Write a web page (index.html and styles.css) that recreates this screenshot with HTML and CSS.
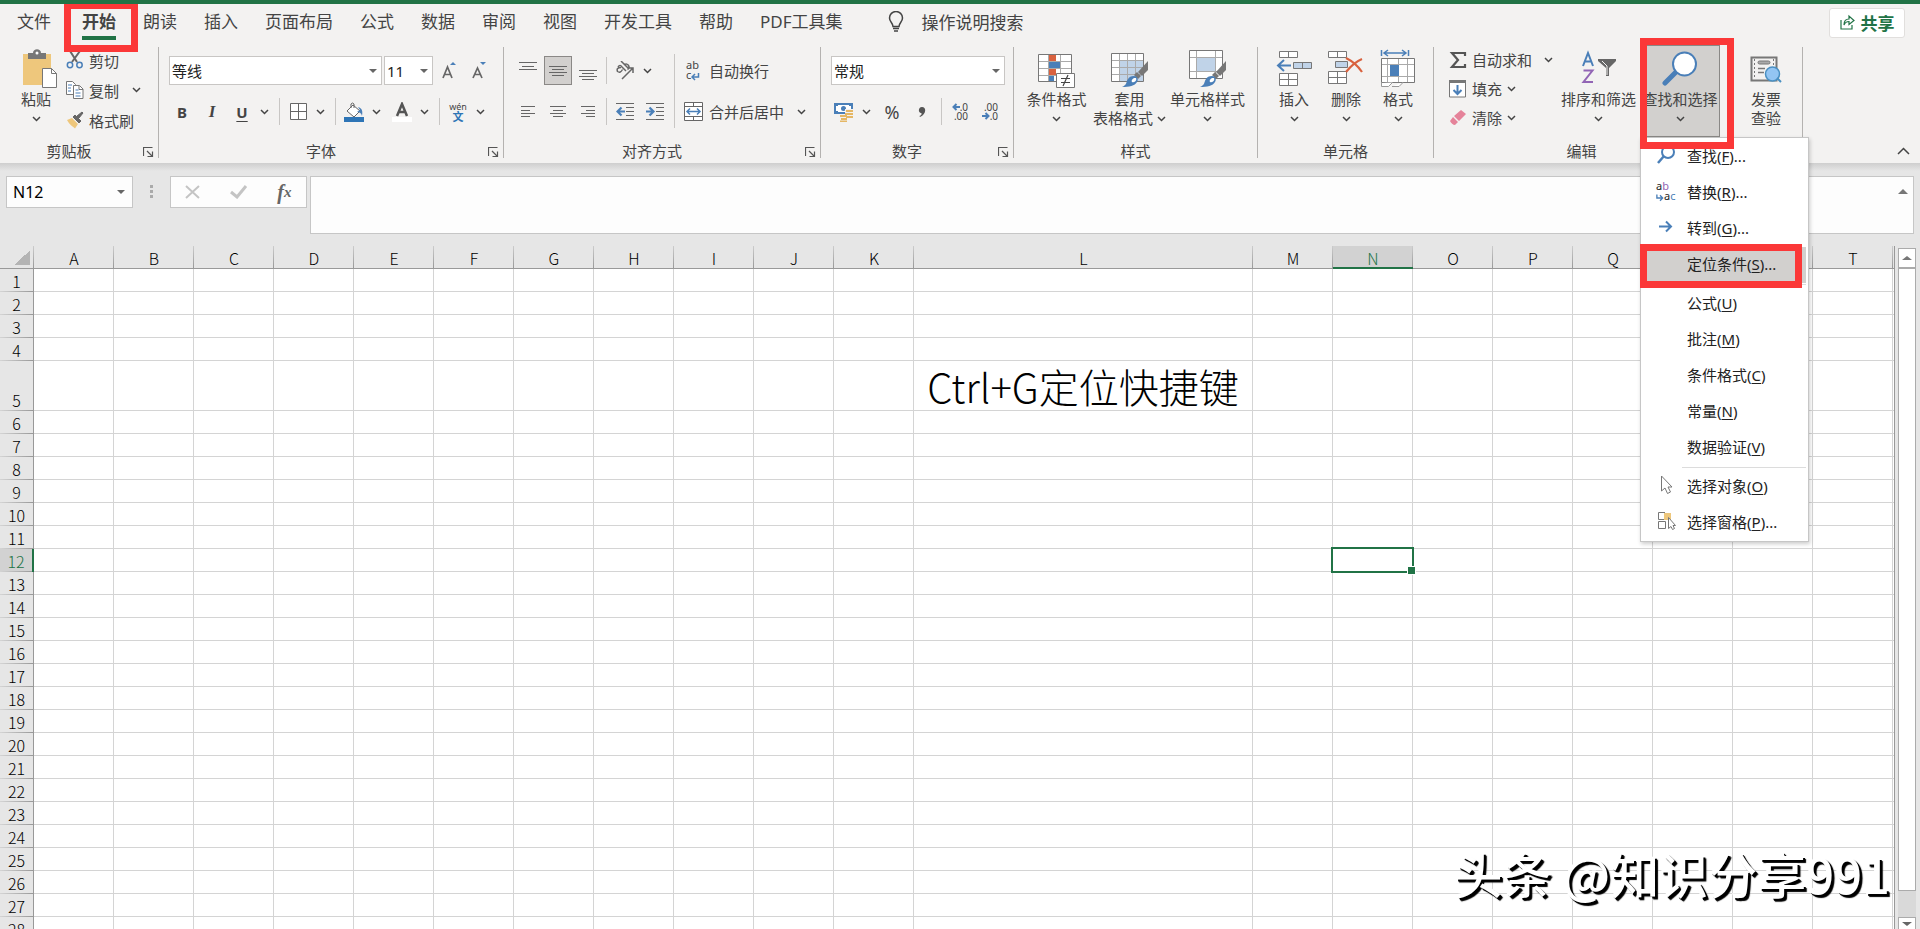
FILE: index.html
```html
<!DOCTYPE html>
<html lang="zh-CN">
<head>
    <meta charset="UTF-8">
    <meta name="viewport" content="width=device-width, initial-scale=1.0">
    <title>Excel</title>
    <link rel="stylesheet" href="styles.css">
</head>
<body>
    <!-- shared icons -->
    <svg class="defs" width="0" height="0">
        <symbol id="chev" viewBox="0 0 9 6"><path d="M1 1l3.5 3.5L8 1" fill="none" stroke="#444" stroke-width="1.5"/></symbol>
        <symbol id="launch" viewBox="0 0 11 11"><path d="M.5 9V.5H9.500M4 4l5 5M9.500 4.500V9.500H4.500" fill="none" stroke="#555" stroke-width="1.200"/></symbol>
        <symbol id="brush" viewBox="0 0 28 28">
            <path d="M27 1v9l-6 6-4-4z" fill="#777"/><path d="M16 12l4 4-3 3-4-4z" fill="#777"/>
            <path d="M13 16c3 0 5 3 3 6-2 4-8 5-15 5 5-2 4-5 6-8 1-2 3-3 6-3z" fill="#4a7fb8"/>
            <path d="M13 18c-2 1-3 3-2 4 3 1 5-2 4-4z" fill="#fff"/>
        </symbol>
    </svg>

    <nav class="tabs">
        <a href="#" class="tab tab-file">文件</a>
        <a href="#" class="tab active">开始<span class="mark mark-tab"></span></a>
        <a href="#" class="tab">朗读</a>
        <a href="#" class="tab">插入</a>
        <a href="#" class="tab">页面布局</a>
        <a href="#" class="tab">公式</a>
        <a href="#" class="tab">数据</a>
        <a href="#" class="tab">审阅</a>
        <a href="#" class="tab">视图</a>
        <a href="#" class="tab">开发工具</a>
        <a href="#" class="tab">帮助</a>
        <a href="#" class="tab">PDF工具集</a>
        <button class="tell-me">
            <svg width="16" height="21" viewBox="0 0 16 21" fill="none" stroke="#444" stroke-width="1.500"><path d="M5 15.500C5 12 1.500 11 1.500 7a6.500 6.500 0 0 1 13 0c0 4-3.500 5-3.500 8.500zM5 17.500h6M6 20h4"/></svg>
            操作说明搜索
        </button>
        <button class="share">
            <svg width="15" height="16" viewBox="0 0 15 16" fill="none" stroke="#217346" stroke-width="1.200"><path d="M1 6v9h11v-4M4 11c0-4 2-6 5-6V2l5 4.500-5 4V7.500C7 7.500 5 8.500 4 11z"/></svg>
            共享
        </button>
    </nav>

    <div class="ribbon">
        <section class="group">
            <div class="body clipboard">
                <button class="big paste">
                    <svg width="36" height="40" viewBox="0 0 36 40"><path d="M1 5h28v31H1z" fill="#eec77c"/><path d="M6 4h5c0-5 8-5 8 0h5v6H6z" fill="#777"/><circle cx="15" cy="4" r="1.500" fill="#fff"/><path d="M20.500 19.500h9l5 5v14h-14z" fill="#fff" stroke="#777"/><path d="M29.500 19.500v5h5" fill="none" stroke="#777"/></svg>
                    <span>粘贴</span>
                    <svg class="chev"><use href="#chev"/></svg>
                </button>
                <div class="stack wide-rows">
                    <button class="small">
                        <svg width="18" height="18" viewBox="0 0 18 18" fill="none"><path d="M4 0l7 11M14 0L6 11" stroke="#666" stroke-width="2"/><circle cx="4" cy="14" r="2.700" stroke="#4a7fb8" stroke-width="1.500"/><circle cx="13.500" cy="14" r="2.700" stroke="#4a7fb8" stroke-width="1.500"/></svg>
                        剪切
                    </button>
                    <button class="small">
                        <svg width="18" height="18" viewBox="0 0 18 18" fill="#fff" stroke="#777"><path d="M.5.5h6l3 3v10h-9z"/><path d="M2 4h4M2 7h3M2 10h3" stroke="#4a7fb8"/><path d="M7.500 4.500h6l3.500 3.500v9.500h-9.500z"/><path d="M13 5v3.500h4" fill="none"/><path d="M9.500 9h3M9.500 12h5M9.500 15h5" stroke="#4a7fb8"/></svg>
                        复制
                        <svg class="chev far"><use href="#chev"/></svg>
                    </button>
                    <button class="small">
                        <svg width="18" height="18" viewBox="0 0 18 18"><path d="M1 9l5-2 6 6-3 4.500c-3-3-5-3-8-8.500z" fill="#eec77c"/><path d="M7 6l2-2 6 6-2 2zM11 5l5-4 1 1-4 5z" fill="#666" stroke="#666"/></svg>
                        格式刷
                    </button>
                </div>
            </div>
            <footer><span>剪贴板</span><svg class="launch"><use href="#launch"/></svg></footer>
        </section>

        <section class="group">
            <div class="body rows">
                <div class="row fields">
                    <span class="pick font-name"><select aria-label="字体"><option>等线</option></select></span>
                    <span class="pick font-size"><select aria-label="字号"><option>11</option></select></span>
                    <button class="tool" aria-label="增大字号"><svg width="18" height="20" viewBox="0 0 18 20"><path d="M2 17L6.500 6 11 17M3.500 13.500h6" fill="none" stroke="#666" stroke-width="1.700"/><path d="M9 4l3-3 3 3z" fill="#4a7fb8"/></svg></button>
                    <button class="tool" aria-label="减小字号"><svg width="18" height="20" viewBox="0 0 18 20"><path d="M2 17L6.500 7 11 17M3.500 13.500h6" fill="none" stroke="#666" stroke-width="1.700"/><path d="M9 1l3 3 3-3z" fill="#4a7fb8"/></svg></button>
                </div>
                <div class="row">
                    <button class="tool bold">B</button>
                    <button class="tool italic">I</button>
                    <span class="split"><button class="tool under">U</button><button class="arrow" aria-label="下划线"><svg class="chev"><use href="#chev"/></svg></button></span>
                    <i class="sep"></i>
                    <span class="split"><button class="tool" aria-label="边框"><svg width="17" height="17" viewBox="0 0 17 17"><path d="M.5.5h16v16H.5zM8.500 1v15M1 8.500h15" fill="#fff" stroke="#666"/></svg></button><button class="arrow" aria-label="更多边框"><svg class="chev"><use href="#chev"/></svg></button></span>
                    <i class="sep"></i>
                    <span class="split"><button class="tool" aria-label="填充颜色"><svg width="20" height="20" viewBox="0 0 20 20"><path d="M3 9l6-6 7 6-6 6z" fill="#fff" stroke="#666"/><path d="M7 6V2q1.500-2 3 0v4" fill="none" stroke="#666"/><path d="M14 5c4 1 5 4 4 9-1-3-2-4-5-4l3-2z" fill="#4a7fb8"/><path d="M0 15h20v5H0z" fill="#2e75b6"/></svg></button><button class="arrow" aria-label="更多颜色"><svg class="chev"><use href="#chev"/></svg></button></span>
                    <span class="split"><button class="tool" aria-label="字体颜色"><svg width="20" height="20" viewBox="0 0 20 20"><path d="M5 14l5-12 5 12M6.500 10h7" fill="none" stroke="#555" stroke-width="2.500"/><path d="M0 15h20v5H0z" fill="#fff"/></svg></button><button class="arrow" aria-label="更多字体颜色"><svg class="chev"><use href="#chev"/></svg></button></span>
                    <i class="sep"></i>
                    <span class="split"><button class="tool pinyin"><small>wén</small><b>文</b></button><button class="arrow" aria-label="拼音"><svg class="chev"><use href="#chev"/></svg></button></span>
                </div>
            </div>
            <footer><span>字体</span><svg class="launch"><use href="#launch"/></svg></footer>
        </section>

        <section class="group">
            <div class="body align">
                <div class="rows">
                    <div class="row">
                        <button class="tool" aria-label="顶端对齐"><svg width="18" height="20" viewBox="0 0 18 20"><path d="M0 1.500h18M3 5.500h12M0 8.500h18" stroke="#666"/></svg></button>
                        <button class="tool on" aria-label="垂直居中"><svg width="18" height="20" viewBox="0 0 18 20"><path d="M0 5.500h18M3 8.500h12M0 11.500h18M3 14.500h12" stroke="#666"/></svg></button>
                        <button class="tool" aria-label="底端对齐"><svg width="18" height="20" viewBox="0 0 18 20"><path d="M0 9.500h18M3 12.500h12M0 15.500h18M3 18.500h12" stroke="#666"/></svg></button>
                        <i class="sep"></i>
                        <span class="split"><button class="tool" aria-label="方向"><svg width="20" height="20" viewBox="0 0 20 20" fill="none" stroke="#666" stroke-width="1.500"><path d="M3 6q2-3 4 0l4 4M6 6.500q-5 0-3.500 4 3 2 5-2M6 0l7 7M9 4q3-2 4.500.5t-1 4M7 18L18 7M13 7h5v5"/></svg></button><button class="arrow" aria-label="更多方向"><svg class="chev"><use href="#chev"/></svg></button></span>
                    </div>
                    <div class="row">
                        <button class="tool" aria-label="左对齐"><svg width="14" height="12" viewBox="0 0 14 12"><path d="M0 .5h14M0 4.500h9M0 7.500h14M0 10.500h9" stroke="#666"/></svg></button>
                        <button class="tool" aria-label="居中"><svg width="16" height="12" viewBox="0 0 16 12"><path d="M0 .5h16M3 4.500h10M0 7.500h16M3 10.500h10" stroke="#666"/></svg></button>
                        <button class="tool" aria-label="右对齐"><svg width="14" height="12" viewBox="0 0 14 12"><path d="M0 .5h14M5 4.500h9M0 7.500h14M5 10.500h9" stroke="#666"/></svg></button>
                        <i class="sep"></i>
                        <button class="tool" aria-label="减少缩进"><svg width="19" height="17" viewBox="0 0 19 17"><path d="M0 .5h18M10 4.500h8M10 8.500h8M10 12.500h8M0 16.500h18" stroke="#666"/><path d="M9 8.500H2M5.500 4.500l-4 4 4 4" fill="none" stroke="#4a7fb8" stroke-width="2.200"/></svg></button>
                        <button class="tool" aria-label="增加缩进"><svg width="19" height="17" viewBox="0 0 19 17"><path d="M0 .5h18M10 4.500h8M10 8.500h8M10 12.500h8M0 16.500h18" stroke="#666"/><path d="M0 8.500h7M3.500 4.500l4 4-4 4" fill="none" stroke="#4a7fb8" stroke-width="2.200"/></svg></button>
                    </div>
                </div>
                <i class="sep tall"></i>
                <div class="rows">
                    <button class="small row"><span class="wrap-icon">ab<br>c<svg width="9" height="8" viewBox="0 0 9 8"><path d="M7.500 0v4H1M4 1L1 4l3 3" fill="none" stroke="#4a7fb8" stroke-width="1.500"/></svg></span>自动换行</button>
                    <button class="small row">
                        <svg width="20" height="19" viewBox="0 0 20 19"><path d="M.5.500h18v18H.500zM.500 4.500h18M.500 14.500h18M9.500 0v4M9.500 15v4" fill="#fff" stroke="#666"/><path d="M3 9.500h13M6 6.500l-3 3 3 3M13 6.500l3 3-3 3" fill="none" stroke="#4a7fb8" stroke-width="1.500"/></svg>
                        合并后居中
                        <svg class="chev far"><use href="#chev"/></svg>
                    </button>
                </div>
            </div>
            <footer><span>对齐方式</span><svg class="launch"><use href="#launch"/></svg></footer>
        </section>

        <section class="group">
            <div class="body rows">
                <div class="row fields"><span class="pick number-format"><select aria-label="数字格式"><option>常规</option></select></span></div>
                <div class="row">
                    <span class="split"><button class="tool" aria-label="会计数字格式"><svg width="20" height="20" viewBox="0 0 20 20"><path d="M0 1h19v11H0z" fill="#4a7fb8"/><path d="M4 3h11v1h2v5h-2v1H4V9H2V4h2z" fill="#fff"/><circle cx="9.500" cy="6.500" r="2.500" fill="#4a7fb8"/><path d="M11 7h9v11h-9z" fill="#f3f2f1"/><path d="M12 9h7M11 12h8M12 15h7M6 14h7M7 17h6M6 19.500h7" stroke="#e5b765" stroke-width="2"/></svg></button><button class="arrow" aria-label="更多"><svg class="chev"><use href="#chev"/></svg></button></span>
                    <button class="tool percent">%</button>
                    <button class="tool comma" aria-label="千位分隔"><svg width="8" height="10" viewBox="0 0 8 10"><path d="M4 0c5 0 4 8-2 10l-.5-1C4 8 4 6 3 6 0 6 0 0 4 0z" fill="#555"/></svg></button>
                    <i class="sep"></i>
                    <button class="tool decimal"><span><svg width="8" height="8" viewBox="0 0 8 8"><path d="M8 4H2M4.500 1l-3 3 3 3" fill="none" stroke="#4a7fb8" stroke-width="2"/></svg>.0</span><span>.00</span></button>
                    <button class="tool decimal"><span>.00</span><span><svg width="8" height="8" viewBox="0 0 8 8"><path d="M0 4h6M3.500 1l3 3-3 3" fill="none" stroke="#4a7fb8" stroke-width="2"/></svg>.0</span></button>
                </div>
            </div>
            <footer><span>数字</span><svg class="launch"><use href="#launch"/></svg></footer>
        </section>

        <section class="group">
            <div class="body styles">
                <button class="big">
                    <svg width="38" height="40" viewBox="0 0 38 40"><path d="M.5 5.500h33v27H.5z" fill="#fff"/><path d="M11 6h7v6h-7zM11 20h7v6h-7z" fill="#d9623f"/><path d="M11 13h11v6H11zM11 27h5v6h-5z" fill="#4a7fb8"/><path d="M10.500 6v27M22.500 6v27M1 12.500h33M1 19.500h33M1 26.500h33" stroke="#aaa" fill="none"/><path d="M.5 5.500h33v27H.5z" fill="none" stroke="#777"/><path d="M18.500 24.500h18v14h-18z" fill="#fff" stroke="#777"/><path d="M23 29.500h9M23 33.500h9M30 26l-5 11" stroke="#444" stroke-width="1.200"/></svg>
                    <span>条件格式</span>
                    <svg class="chev"><use href="#chev"/></svg>
                </button>
                <button class="big">
                    <svg width="38" height="40" viewBox="0 0 38 40"><path d="M.5 4.500h32v28H.5z" fill="#fff"/><path d="M9 12h23v20H9z" fill="#c0d3e8"/><path d="M8.500 5v27M16.500 5v27M24.500 5v27M1 11.500h31M1 18.500h31M1 25.500h31" stroke="#aaa"/><path d="M.5 4.500h32v28H.5z" fill="none" stroke="#777"/><use href="#brush" x="10" y="11" width="28" height="28"/></svg>
                    <span>套用</span>
                    <span class="line">表格格式<svg class="chev"><use href="#chev"/></svg></span>
                </button>
                <button class="big">
                    <svg width="38" height="40" viewBox="0 0 38 40"><path d="M.5 1.500h33v28H.5z" fill="#fff" stroke="#777"/><path d="M8 9h18v13H8z" fill="#c0d3e8"/><path d="M7.500 2v27M26.500 2v27M1 8.500h32M1 22.500h32" stroke="#aaa"/><use href="#brush" x="10" y="11" width="28" height="28"/></svg>
                    <span>单元格样式</span>
                    <svg class="chev"><use href="#chev"/></svg>
                </button>
            </div>
            <footer><span>样式</span></footer>
        </section>

        <section class="group">
            <div class="body cells">
                <button class="big">
                    <svg width="36" height="40" viewBox="0 0 36 40" fill="#fff" stroke="#777"><path d="M3.500 2.500h18v6h-18zM12.500 3v5M3.500 24.500h18v12h-18zM12.500 25v11M4 30.500h17"/><path d="M17.500 13.500h18v6h-18zM26.500 14v5" fill="#c0d3e8"/><path d="M15 16.500H2M8 11l-6 5.500 6 5.500" fill="none" stroke="#4a7fb8" stroke-width="2"/></svg>
                    <span>插入</span>
                    <svg class="chev"><use href="#chev"/></svg>
                </button>
                <button class="big">
                    <svg width="36" height="40" viewBox="0 0 36 40" fill="#fff" stroke="#777"><path d="M.5 2.500h18v6h-18zM9.500 3v5M.5 22.500h18v12h-18zM9.500 23v11M1 28.500h17"/><path d="M7.500 12.500h12v6h-12z" fill="#c0d3e8"/><path d="M18 9c6 3 12 8 16 14M34 10c-7 3-12 8-16 13" fill="none" stroke="#d9623f" stroke-width="2.200"/></svg>
                    <span>删除</span>
                    <svg class="chev"><use href="#chev"/></svg>
                </button>
                <button class="big">
                    <svg width="36" height="40" viewBox="0 0 36 40"><path d="M1.500 1v6M28.500 1v6M4 4h22M8 1L4 4l4 3M22 1l4 3-4 3" fill="none" stroke="#4a7fb8" stroke-width="1.500"/><path d="M1.500 9.500h33v24h-33z" fill="#fff"/><path d="M7.500 10v23M27.500 10v23M18.500 10v23M2 15.500h32M2 27.500h32" stroke="#aaa"/><path d="M10 16h9v11h-9z" fill="#4a7fb8"/><path d="M1.500 9.500h33v24h-33z" fill="none" stroke="#777"/><path d="M1.500 34v3.500h7l4-4M12 37.500h7l4-4" fill="#fff" stroke="#999"/></svg>
                    <span>格式</span>
                    <svg class="chev"><use href="#chev"/></svg>
                </button>
            </div>
            <footer><span>单元格</span></footer>
        </section>

        <section class="group">
            <div class="body editing">
                <div class="stack">
                    <button class="small">
                        <svg width="18" height="18" viewBox="0 0 18 18"><path d="M16 5V2H3l6 7-6 7h13v-3" fill="none" stroke="#555" stroke-width="2.200"/></svg>
                        自动求和
                        <svg class="chev far"><use href="#chev"/></svg>
                    </button>
                    <button class="small">
                        <svg width="18" height="18" viewBox="0 0 18 18"><path d="M.5.500h16v16.500H.500z" fill="#fff" stroke="#777"/><path d="M0 0h17v3H0z" fill="#777"/><path d="M8.500 5v9M4.500 10l4 4 4-4" fill="none" stroke="#4a7fb8" stroke-width="2"/></svg>
                        填充
                        <svg class="chev"><use href="#chev"/></svg>
                    </button>
                    <button class="small">
                        <svg width="18" height="18" viewBox="0 0 18 18"><path d="M12 1l5 4-7 7-5-5zM4 8l5 5-3 3c-2 0-4-2-5-4z" fill="#e5839a"/></svg>
                        清除
                        <svg class="chev"><use href="#chev"/></svg>
                    </button>
                </div>
                <button class="big sort">
                    <svg width="36" height="40" viewBox="0 0 36 40" fill="none"><path d="M2 17L7 4l5 13M4 12.500h6.500" stroke="#4a7fb8" stroke-width="2"/><path d="M2.500 21.500h9l-9 11.500h9.500" stroke="#9265b5" stroke-width="2"/><path d="M17 10h18v2l-7 7v8h-3v-8l-8-7z" fill="#666"/><path d="M21 12l5 5v9" stroke="#f3f2f1"/></svg>
                    <span>排序和筛选</span>
                    <svg class="chev"><use href="#chev"/></svg>
                </button>
                <div class="find">
                    <button class="big pressed">
                        <svg width="36" height="40" viewBox="0 0 36 40"><path d="M15 22L3 34" stroke="#4a7fb8" stroke-width="5" stroke-linecap="round"/><circle cx="22.500" cy="15" r="11.500" fill="#fff" stroke="#4a7fb8" stroke-width="2"/></svg>
                        <span>查找和选择</span>
                        <svg class="chev"><use href="#chev"/></svg>
                    </button>
                    <div class="menu">
                        <button><svg width="20" height="20" viewBox="0 0 20 20"><path d="M8 11l-6 7" stroke="#4a7fb8" stroke-width="2.500"/><circle cx="12" cy="7" r="6" fill="none" stroke="#4a7fb8" stroke-width="2"/></svg><span>查找(<u>F</u>)...</span></button>
                        <button><span class="replace-icon">a<i>b</i><br><svg width="8" height="8" viewBox="0 0 9 8"><path d="M1 0v4h6M4.500 1l3 3-3 3" fill="none" stroke="#4a7fb8" stroke-width="1.500"/></svg>a<em>c</em></span><span>替换(<u>R</u>)...</span></button>
                        <button><svg width="20" height="20" viewBox="0 0 20 20"><path d="M3 9.500h12M10 4.500l5 5-5 5" fill="none" stroke="#4a7fb8" stroke-width="2"/></svg><span>转到(<u>G</u>)...</span></button>
                        <button class="current"><span>定位条件(<u>S</u>)...</span><span class="mark mark-item"></span></button>
                        <hr>
                        <button><span>公式(<u>U</u>)</span></button>
                        <button><span>批注(<u>M</u>)</span></button>
                        <button><span>条件格式(<u>C</u>)</span></button>
                        <button><span>常量(<u>N</u>)</span></button>
                        <button><span>数据验证(<u>V</u>)</span></button>
                        <hr>
                        <button><svg width="20" height="20" viewBox="0 0 20 20"><path d="M5.500 1v15l3.500-3 2.500 5.500 3-1.500-2.500-5h4z" fill="#fff" stroke="#777"/></svg><span>选择对象(<u>O</u>)</span></button>
                        <button><svg width="20" height="20" viewBox="0 0 20 20"><path d="M9 1.500H2.500v7H9M2.500 10.500h7v7h-7z" fill="#fff" stroke="#777"/><path d="M8 2h7v7H8z" fill="#eec77c"/><path d="M12.500 6.500v11l2.500-2 1.500 3 2-1-1.500-3h2.500z" fill="#fff" stroke="#777"/></svg><span>选择窗格(<u>P</u>)...</span></button>
                    </div>
                    <span class="mark mark-find"></span>
                </div>
            </div>
            <footer><span>编辑</span></footer>
        </section>

        <section class="group">
            <div class="body invoice">
                <button class="big">
                    <svg width="32" height="40" viewBox="0 0 32 40"><path d="M1.500 8.500h25v23h-25z" fill="none" stroke="#777" stroke-width="2"/><path d="M4.500 10v20M23.500 10v9" stroke="#777" stroke-dasharray="2 2"/><rect x="8" y="12" width="12" height="3" rx="1.500" fill="#aaa" stroke="#777"/><path d="M8 19.500h7M8 23.500h6" stroke="#777" stroke-width="1.500"/><circle cx="22.500" cy="25" r="7" fill="#93c5f3" stroke="#4a90c2" stroke-width="1.500"/><path d="M27 29l4 4" stroke="#4a90c2" stroke-width="2"/></svg>
                    <span>发票</span>
                    <span>查验</span>
                </button>
            </div>
            <footer></footer>
        </section>
        <button class="collapse" aria-label="折叠功能区"><svg width="13" height="8" viewBox="0 0 13 8"><path d="M1 7l5.500-5.500L12 7" fill="none" stroke="#444" stroke-width="1.500"/></svg></button>
    </div>

    <div class="formula-bar">
        <div class="name-box"><input type="text" value="N12" aria-label="名称框"><i class="tri down"></i></div>
        <svg class="grip" width="3" height="13"><path d="M0 0h3v3H0zM0 5h3v3H0zM0 10h3v3H0z" fill="#aaa"/></svg>
        <div class="fx-box">
            <button aria-label="取消"><svg width="16" height="14" viewBox="0 0 16 14"><path d="M1 1l13 12M14 1L1 13" stroke="#c4c4c4" stroke-width="2"/></svg></button>
            <button aria-label="输入"><svg width="18" height="14" viewBox="0 0 18 14"><path d="M1 7l6 5L16 1" fill="none" stroke="#c4c4c4" stroke-width="3"/></svg></button>
            <button class="fx">f<small>x</small></button>
        </div>
        <div class="formula"><textarea aria-label="编辑栏"></textarea><i class="tri up"></i></div>
    </div>

    <main class="sheet">
        <div class="grid">
            <table id="cells">
                <colgroup id="cols"></colgroup>
                <thead><tr id="heads"><th class="corner"></th></tr></thead>
                <tbody id="rows"></tbody>
            </table>
            <div class="watermark">头条 @知识分享991</div>
        </div>
        <div class="scrollbar">
            <button aria-label="向上"><i class="tri up"></i></button>
            <div class="thumb"></div>
            <div class="track"></div>
            <button aria-label="向下"><i class="tri down"></i></button>
        </div>
    </main>

    <script>
        const letters = 'ABCDEFGHIJKLMNOPQRST'.split('');
        const content = { L5: 'Ctrl+G定位快捷键' };
        const selected = { col: 'N', row: 12 };

        const cols = document.getElementById('cols');
        const heads = document.getElementById('heads');
        const rows = document.getElementById('rows');

        // Enough rows to fill the visible part of the sheet
        const rowHeight = 23;
        const sheetHeight = document.querySelector('.sheet').clientHeight;
        const rowCount = Math.max(12, Math.ceil(sheetHeight / rowHeight) - 2);

        // Column widths and letters
        cols.innerHTML = '<col class="col-head">' +
            letters.map(l => `<col class="${l === 'L' ? 'col-wide' : 'col'}">`).join('') + '<col>';
        letters.forEach(l => {
            const th = document.createElement('th');
            th.textContent = l;
            if (l === selected.col) th.className = 'selected';
            heads.appendChild(th);
        });
        heads.insertAdjacentHTML('beforeend', '<th class="rest"></th>');

        // Rows
        for (let r = 1; r <= rowCount; r++) {
            const tr = document.createElement('tr');
            if (r === 5) tr.className = 'tall';
            tr.innerHTML = `<th class="${r === selected.row ? 'selected' : ''}">${r}</th>` +
                letters.map(l => {
                    const active = l === selected.col && r === selected.row;
                    return `<td${active ? ' class="active-cell"' : ''}>${content[l + r] || ''}</td>`;
                }).join('') + '<td class="rest"></td>';
            rows.appendChild(tr);
        }
    </script>
</body>
</html>
```
FILE: styles.css
```css
* {
    box-sizing: border-box;
}
body {
    margin: 0;
    height: 100vh;
    display: flex;
    flex-direction: column;
    overflow: hidden;
    background: #e6e6e6;
    border-top: 4px solid #217346;
    font-family: "Noto Sans", "Noto Sans CJK SC", sans-serif;
    font-size: 15px;
    color: #444;
}
button {
    font: inherit;
    color: inherit;
    background: none;
    border: none;
    padding: 0;
    display: flex;
    align-items: center;
    justify-content: center;
    white-space: nowrap;
    cursor: pointer;
}
svg {
    flex: none;
    display: block;
}
.defs {
    position: absolute;
}
.chev {
    width: 9px;
    height: 6px;
}

/* tabs */
.tabs {
    display: flex;
    gap: 27px;
    height: 40px;
    padding: 0 15px 0 17px;
    background: #f3f2f1;
    font-size: 17px;
}
.tab {
    position: relative;
    height: 36px;
    line-height: 36px;
    color: #444;
    text-decoration: none;
    white-space: nowrap;
}
.tab-file {
    margin-right: 4px;
}
.tab.active {
    font-weight: bold;
    border-bottom: 4px solid #217346;
}
.tell-me {
    height: 34px;
    margin-left: 18px;
    gap: 18px;
}
.share {
    height: 30px;
    width: 76px;
    margin: 4px 0 0 auto;
    padding-bottom: 2px;
    gap: 6px;
    background: #fff;
    border: 1px solid #e1dfdd;
    border-radius: 3px;
    color: #217346;
    font-weight: bold;
}

/* red highlight frames */
.mark {
    position: absolute;
    border: 7px solid #fb3838;
    z-index: 5;
    pointer-events: none;
}
.mark-tab {
    inset: -2px -22px -16px -18px;
}
.mark-find {
    inset: -9px -13px -5px 0;
}
.mark-item {
    inset: -3px 6px -5px -1px;
}

/* ribbon */
.ribbon {
    display: flex;
    height: 119px;
    padding: 3px 0 5px;
    background: #f3f2f1;
    position: relative;
    z-index: 2;
}
.group {
    display: flex;
    flex-direction: column;
    border-right: 1px solid #b4b2b0;
}
.body {
    flex: 1;
    display: flex;
}
.group footer {
    display: flex;
    height: 14px;
    line-height: 14px;
    text-align: center;
}
.group footer span {
    flex: 1;
}
.launch {
    width: 11px;
    height: 11px;
    margin: 3px 4px 0 5px;
}
.big {
    flex-direction: column;
    justify-content: flex-start;
    height: 92px;
    margin-top: -2px;
    padding-top: 4px;
    line-height: 19px;
}
.big > svg:first-child {
    margin-bottom: 1px;
}
.big > .chev {
    margin-top: 7px;
}
.line {
    display: flex;
    align-items: center;
    gap: 4px;
}
.stack {
    display: flex;
    flex-direction: column;
    margin-top: -2px;
}
.small {
    height: 29px;
    gap: 5px;
    justify-content: flex-start;
}
.wide-rows .small {
    height: 30px;
}
.small .far {
    margin-left: 8px;
}
.clipboard {
    padding: 0 17px 0 14px;
}
.paste {
    width: 44px;
    margin-right: 8px;
}
.paste > svg:first-child {
    margin-left: 8px;
}
.rows {
    display: flex;
    flex-direction: column;
    padding: 9px 8px 0;
    gap: 12px;
}
.row {
    display: flex;
    align-items: center;
    height: 29px;
}
.fields {
    padding-left: 2px;
}
.pick {
    position: relative;
    height: 29px;
    margin-right: 2px;
}
.pick select {
    appearance: none;
    width: 100%;
    height: 100%;
    padding: 0 2px;
    font: inherit;
    color: #222;
    background: #fff;
    border: 1px solid #c8c6c4;
    border-radius: 0;
}
.pick::after,
.tri {
    content: "";
    width: 0;
    height: 0;
    border: 4px solid transparent;
}
.pick::after,
.tri.down {
    border-top-color: #666;
    border-bottom: none;
}
.tri.up {
    border-bottom-color: #777;
    border-top: none;
}
.pick::after {
    position: absolute;
    right: 5px;
    top: 13px;
}
.font-name {
    width: 213px;
}
.font-size {
    width: 49px;
}
.number-format {
    width: 174px;
    margin-right: 0;
}
.tool {
    width: 30px;
    height: 29px;
}
.tool.on {
    width: 28px;
    margin: 0 1px;
    background: #d2d0ce;
    border: 1px solid #8a8886;
}
.arrow {
    width: 14px;
    height: 29px;
}
.split {
    display: flex;
    margin-right: 4px;
}
.sep {
    width: 1px;
    height: 27px;
    margin: 0 3px 0 4px;
    background: #c8c6c4;
}
.tall.sep {
    height: 74px;
    margin: 7px 0 0 4px;
}
.bold {
    font-weight: bold;
}
.italic {
    font-family: "Liberation Serif", serif;
    font-style: italic;
    font-weight: bold;
    font-size: 17px;
}
.under {
    font-weight: bold;
    text-decoration: underline;
    text-underline-offset: 3px;
}
.pinyin {
    flex-direction: column;
    line-height: 10px;
}
.pinyin small {
    font-size: 9px;
}
.pinyin b {
    font-size: 11px;
    color: #2e75b6;
}
.percent {
    font-size: 18px;
}
.decimal {
    flex-direction: column;
    align-items: flex-end;
    padding-right: 7px;
    font-size: 10px;
    line-height: 9px;
}
.decimal span {
    display: flex;
    align-items: center;
}
.align .rows {
    padding: 9px 0 0 9px;
}
.align .rows .sep {
    margin: 0 3px;
}
.align .small {
    padding-right: 14px;
}
.wrap-icon,
.replace-icon {
    width: 20px;
    font-size: 11px;
    line-height: 10px;
    text-align: left;
}
.wrap-icon {
    padding-left: 2px;
}
.wrap-icon svg,
.replace-icon svg {
    display: inline-block;
    vertical-align: -2px;
}
.replace-icon i {
    font-style: normal;
    color: #9265b5;
}
.replace-icon em {
    font-style: normal;
    color: #4a7fb8;
}
.styles {
    padding: 0 8px 0 6px;
}
.styles .big {
    width: 73px;
}
.styles .big:last-child {
    width: 83px;
}
.cells {
    padding: 0 9px 0 10px;
}
.cells .big {
    width: 52px;
}
.editing {
    padding: 0 8px 0 15px;
}
.editing .stack {
    width: 108px;
}
.editing .small .far {
    margin-left: 7px;
}
.sort {
    width: 83px;
}
.find {
    position: relative;
    width: 81px;
}
.find .big {
    width: 80px;
}
.pressed {
    background: #d2d0ce;
    border: 1px solid #8a8886;
    padding-top: 3px;
}
.invoice {
    width: 72px;
    justify-content: center;
}
.collapse {
    margin: auto 10px 0 auto;
    width: 13px;
    height: 14px;
}

/* find & select menu */
.menu {
    position: absolute;
    top: 90px;
    left: 0;
    width: 169px;
    padding-top: 1px;
    background: #fff;
    border: 1px solid #c6c6c6;
    box-shadow: 1px 2px 4px rgba(0, 0, 0, 0.2);
    color: #222;
    z-index: 3;
}
.menu button {
    position: relative;
    width: 100%;
    height: 36px;
    padding: 0 0 4px 46px;
    justify-content: flex-start;
}
.menu button > svg,
.menu .replace-icon {
    margin: 0 11px 0 -31px;
    width: 20px;
}
.menu u {
    text-underline-offset: 2px;
}
.menu .current::before {
    content: "";
    position: absolute;
    inset: 0 2px 0 1px;
    background: #d2d0ce;
    z-index: -1;
}
.menu .current {
    z-index: 0;
}
.menu hr {
    height: 1px;
    margin: 1px 2px 1px 41px;
    border: none;
    background: #dcdcdc;
}

/* formula bar */
.formula-bar {
    display: flex;
    align-items: flex-start;
    padding: 13px 6px 12px;
    background: linear-gradient(#cecece, #e6e6e6 8px);
}
.name-box,
.fx-box,
.formula {
    display: flex;
    align-items: center;
    height: 32px;
    background: #fdfdfd;
    border: 1px solid #c6c6c6;
}
.name-box {
    width: 127px;
    padding-right: 7px;
}
.name-box input {
    flex: 1;
    min-width: 0;
    padding: 0 6px;
    border: none;
    background: none;
    font: inherit;
    font-size: 16px;
    color: #000;
}
.grip {
    margin: 9px 17px 0;
}
.fx-box {
    width: 137px;
    justify-content: space-around;
}
.fx {
    font-family: "Liberation Serif", serif;
    font-style: italic;
    font-weight: bold;
    font-size: 20px;
    color: #666;
}
.fx small {
    font-size: 15px;
}
.formula {
    flex: 1;
    height: 58px;
    margin-left: 3px;
    padding: 12px 5px 0 0;
    align-items: flex-start;
}
.formula .tri {
    border-width: 0 5px 5px;
}
.formula textarea {
    flex: 1;
    height: 40px;
    border: none;
    resize: none;
    background: none;
}

/* sheet */
.sheet {
    flex: 1;
    min-height: 0;
    display: flex;
}
.grid {
    flex: 1;
    min-width: 0;
    position: relative;
    overflow: hidden;
    border-right: 1px solid #999;
    background: #fff;
}
table {
    table-layout: fixed;
    width: 100%;
    border-collapse: separate;
    border-spacing: 0;
    font-family: "Noto Sans CJK SC", sans-serif;
    font-size: 16px;
    color: #000;
}
.col-head {
    width: 34px;
}
.col {
    width: 80px;
}
.col-wide {
    width: 339px;
}
th,
td {
    height: 23px;
    padding: 0;
    line-height: 22px;
    font-weight: 300;
    text-align: center;
    vertical-align: bottom;
}
td {
    border-right: 1px solid #d4d4d4;
    border-bottom: 1px solid #d4d4d4;
    white-space: nowrap;
}
thead th {
    border-bottom: 1px solid #999;
    line-height: 20px;
    background: linear-gradient(#ccc, #999) right / 1px 100% no-repeat #e6e6e6;
}
tbody th {
    border-right: 1px solid #999;
    background: linear-gradient(to right, #d4d4d4, #999) bottom / 100% 1px no-repeat #e6e6e6;
}
thead .selected {
    border-bottom: 2px solid #217346;
    background-color: #d2d2d2;
    color: #217346;
    line-height: 18px;
}
tbody .selected {
    border-right: 2px solid #217346;
    background-color: #d2d2d2;
    color: #217346;
}
thead .corner {
    background: linear-gradient(#ccc, #999) right / 1px 100% no-repeat,
        linear-gradient(135deg, transparent 50%, #b4b4b4 50%) 15px 4px / 15px 15px no-repeat #e6e6e6;
}
thead .rest {
    background: #e6e6e6;
}
td.rest {
    border-right: none;
}
.tall td {
    height: 50px;
    line-height: 48px;
    font-size: 40px;
    vertical-align: middle;
}
.active-cell {
    position: relative;
}
.active-cell::before {
    content: "";
    position: absolute;
    inset: -2px -2px -2px -2px;
    border: 2px solid #217346;
}
.active-cell::after {
    content: "";
    position: absolute;
    right: -4px;
    bottom: -4px;
    width: 7px;
    height: 7px;
    background: #217346;
    border: 1px solid #fff;
}
.watermark {
    position: absolute;
    right: 4px;
    bottom: 21px;
    font-family: "Noto Sans CJK SC", sans-serif;
    font-size: 49px;
    font-weight: 500;
    line-height: 70px;
    color: #fff;
    text-shadow: 2px 2px 0 #000, 3px 3px 1px #000;
    white-space: nowrap;
}
.scrollbar {
    display: flex;
    flex-direction: column;
    width: 18px;
    margin: 2px 4px 0 3px;
    background: #d9d9d9;
}
.scrollbar button {
    height: 20px;
    background: #fff;
    border: 1px solid #ababab;
}
.scrollbar .tri {
    border-left-width: 5px;
    border-right-width: 5px;
}
.thumb {
    flex: 24;
    background: #fff;
    border: 1px solid #ababab;
}
.track {
    flex: 1;
}
.scrollbar button:last-child {
    height: 12px;
    border-bottom: none;
}
```
